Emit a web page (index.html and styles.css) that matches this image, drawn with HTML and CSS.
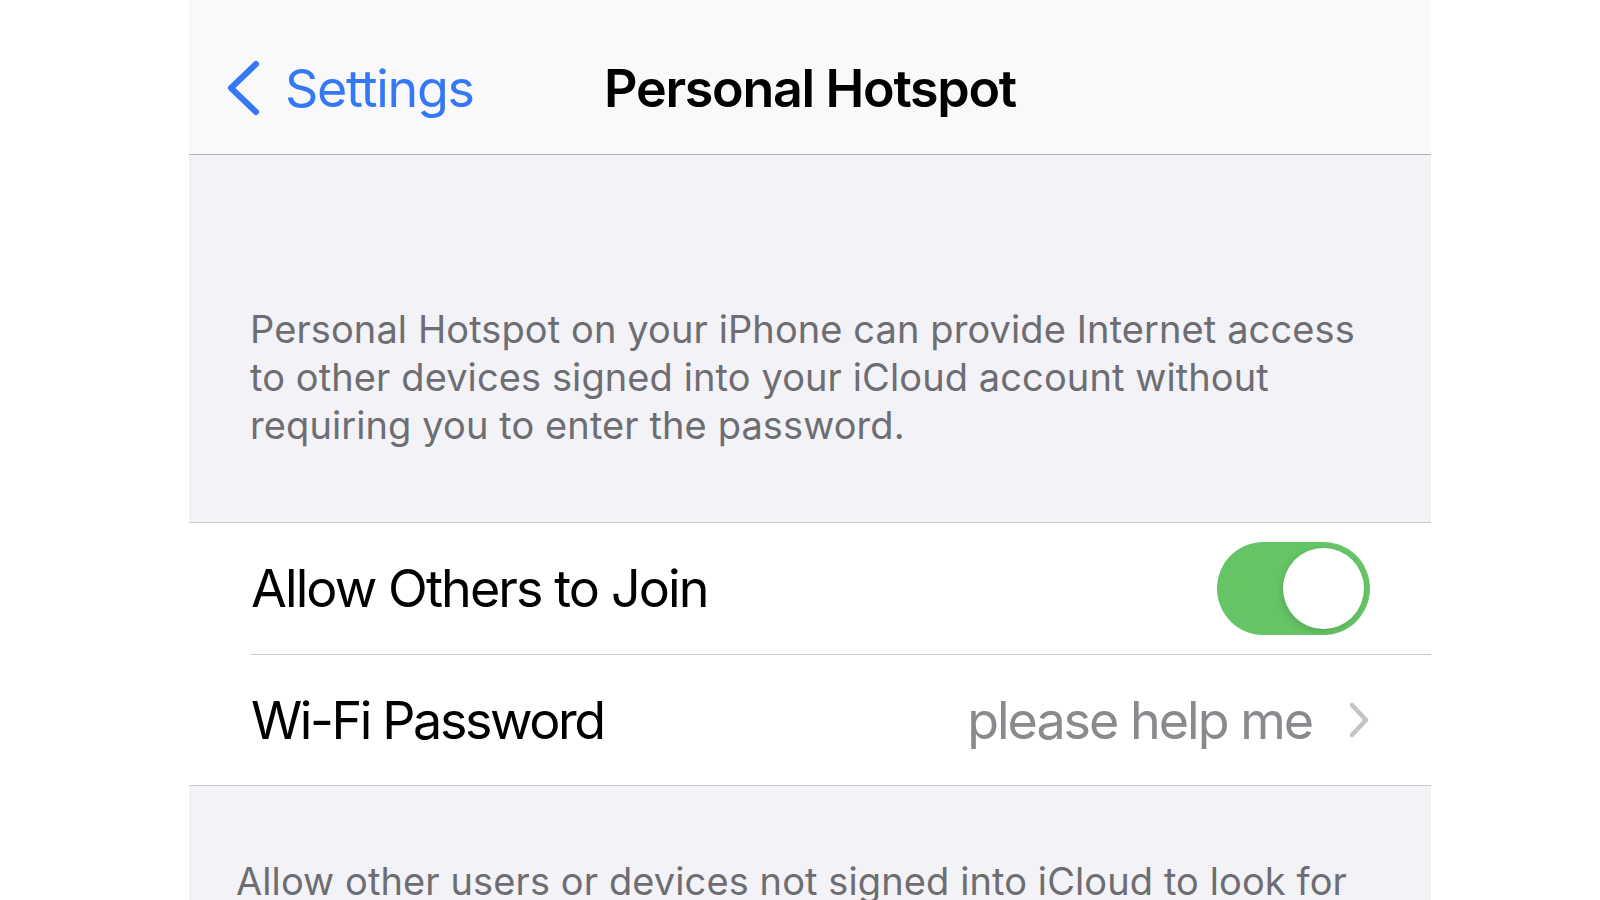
FILE: index.html
```html
<!DOCTYPE html>
<html lang="en">
<head>
  <meta charset="UTF-8">
  <meta name="viewport" content="width=device-width, initial-scale=1.0">
  <title>Personal Hotspot</title>
  <link rel="stylesheet" href="styles.css">
</head>
<body>
  <div class="screen">
    <div class="nav-bar">
      <div class="nav-back">
        <svg class="chevron-back" viewBox="0 0 36 56" width="36" height="56">
          <path d="M31 4 L6 28 L31 52" fill="none" stroke="#3478f6" stroke-width="6" stroke-linecap="round" stroke-linejoin="round"/>
        </svg>
        <span class="nav-back-label">Settings</span>
      </div>
      <div class="nav-title">Personal Hotspot</div>
      <div></div>
    </div>

    <div class="section-header">
      Personal Hotspot on your iPhone can provide Internet access to other devices signed into your iCloud account without requiring you to enter the password.
    </div>

    <div class="group">
      <div class="row">
        <div class="row-label">Allow Others to Join</div>
        <div class="toggle on"><div class="toggle-knob"></div></div>
      </div>
      <div class="row">
        <div class="row-label tight">Wi-Fi Password</div>
        <div class="row-value">please help me</div>
        <svg class="chevron-right" viewBox="0 0 22 38" width="22" height="38">
          <path d="M4 4 L18 19 L4 34" fill="none" stroke="#c4c4c7" stroke-width="4.5" stroke-linecap="round" stroke-linejoin="round"/>
        </svg>
      </div>
    </div>

    <div class="section-footer">
      Allow other users or devices not signed into iCloud to look for
    </div>
  </div>
</body>
</html>
```

FILE: styles.css
```css
body {
  margin: 0;
  padding: 0;
  background-color: #fff;
  font-family: Inter, "Noto Sans", sans-serif;
  overflow: hidden;
  height: 900px;
}

.screen {
  width: 1242px;
  margin-left: 189px;
  height: 900px;
  background-color: #f2f2f7;
  overflow: hidden;
}

.nav-bar {
  height: 155px;
  background-color: #f9f9fb;
  border-bottom: 1px solid #b3b3b6;
  display: grid;
  grid-template-columns: 1fr auto 1fr;
  align-items: center;
  padding-top: 22px;
  box-sizing: border-box;
}

.nav-back {
  display: flex;
  align-items: center;
  padding-left: 36px;
  gap: 24px;
  color: #3478f6;
}

.chevron-back {
  display: block;
}

.nav-back-label {
  font-size: 52px;
  letter-spacing: -1.3px;
}

.nav-title {
  font-size: 52px;
  font-weight: 600;
  color: #000;
  letter-spacing: -1.3px;
}

.section-header {
  padding: 150px 60px 73px 61px;
  font-size: 38px;
  line-height: 48px;
  color: #6d6d72;
  letter-spacing: 0.1px;
}

.group {
  background-color: #fff;
  border-top: 1px solid #c8c8cc;
  border-bottom: 1px solid #c8c8cc;
}

.row {
  height: 131px;
  display: flex;
  align-items: center;
  margin-left: 62px;
  padding-right: 61px;
  box-sizing: border-box;
}

.row + .row {
  border-top: 1px solid #c8c8cc;
}

.row-label {
  flex: 1;
  font-size: 52px;
  color: #000;
  letter-spacing: -1.9px;
}

.row-label.tight {
  letter-spacing: -2.4px;
}

.row-value {
  font-size: 52px;
  color: #8a8a8e;
  margin-right: 36px;
  letter-spacing: -2px;
}

.chevron-right {
  display: block;
}

.toggle {
  width: 153px;
  height: 93px;
  border-radius: 47px;
  background-color: #e9e9eb;
  position: relative;
}

.toggle.on {
  background-color: #65c466;
}

.toggle-knob {
  position: absolute;
  top: 6px;
  right: 6px;
  width: 81px;
  height: 81px;
  border-radius: 50%;
  background-color: #fff;
  box-shadow: -2px 3px 6px rgba(0, 0, 0, 0.12);
}

.section-footer {
  padding: 71px 60px 0 47px;
  font-size: 38px;
  line-height: 48px;
  color: #6d6d72;
  letter-spacing: 0.1px;
  white-space: nowrap;
}
```
